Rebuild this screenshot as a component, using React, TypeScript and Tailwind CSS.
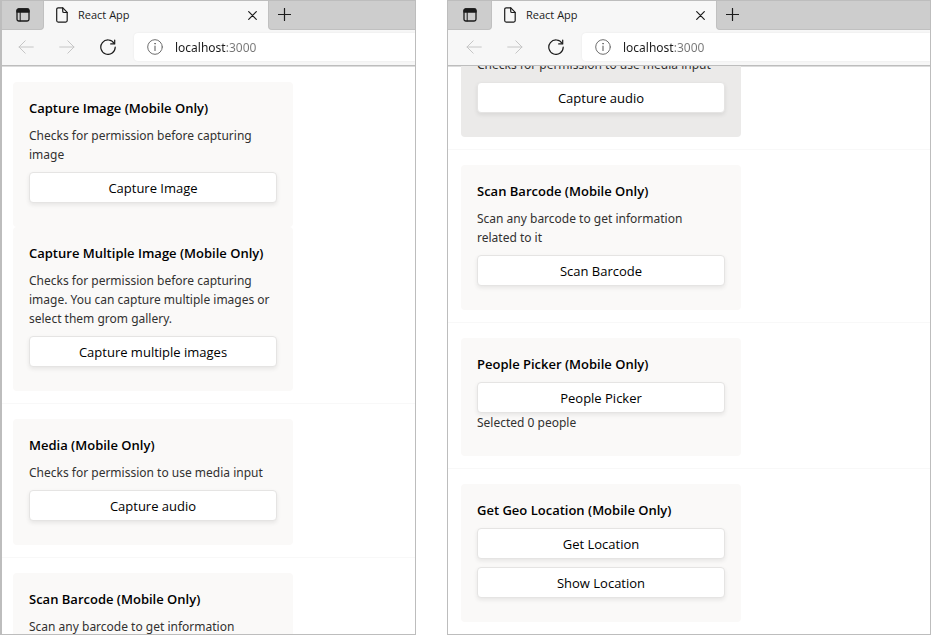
import type { ReactNode } from 'react';

const strokeProps = {
  fill: 'none',
  stroke: 'currentColor',
  strokeLinecap: 'round' as const,
  strokeLinejoin: 'round' as const,
};

function TabActionsIcon() {
  return (
    <svg width="14" height="14" viewBox="0 0 14 14" {...strokeProps} strokeWidth="1.3">
      <rect x="1" y="1" width="12" height="12" rx="1.8" />
      <path d="M1 2.8C1 1.8 1.8 1 2.8 1h8.4C12.2 1 13 1.8 13 2.8V4H1z" fill="currentColor" />
      <path d="M4.2 4v9" strokeWidth="1" />
    </svg>
  );
}

function PageIcon() {
  return (
    <svg width="12" height="16" viewBox="0 0 12 16" {...strokeProps} strokeWidth="1.2">
      <path d="M2.2.8h4.6l4.4 4.6v8.2c0 .9-.6 1.5-1.5 1.5H2.2c-.9 0-1.5-.6-1.5-1.5V2.3C.7 1.4 1.300.8 2.200.8z" />
      <path d="M6.700.9v3.300c0 .8.5 1.300 1.300 1.300h3.100" />
    </svg>
  );
}

function CloseIcon() {
  return (
    <svg width="9" height="9" viewBox="0 0 9 9" {...strokeProps} strokeWidth="1.2">
      <path d="M.7.7l7.600 7.600M8.300.7L.7 8.300" />
    </svg>
  );
}

function PlusIcon() {
  return (
    <svg width="13" height="13" viewBox="0 0 13 13" {...strokeProps} strokeWidth="1.2">
      <path d="M6.500.5v12M.5 6.500h12" />
    </svg>
  );
}

function ArrowIcon({ forward = false }: { forward?: boolean }) {
  return (
    <svg width="16" height="14" viewBox="0 0 16 14" {...strokeProps} strokeWidth="1">
      {forward ? <path d="M.7 7h14.300M8.800.8L15 7l-6.200 6.200" /> : <path d="M15.300 7H1M7.200.8L1 7l6.200 6.200" />}
    </svg>
  );
}

function RefreshIcon() {
  return (
    <svg width="16" height="16" viewBox="0 0 16 16" {...strokeProps} strokeWidth="1.2">
      <path d="M14.200 4.500A7.200 7.200 0 1 0 15.200 8" />
      <path d="M14.700 1v3.900h-4" />
    </svg>
  );
}

function InfoIcon() {
  return (
    <svg width="16" height="16" viewBox="0 0 16 16" {...strokeProps} strokeWidth="1">
      <circle cx="8" cy="8" r="7.300" />
      <path d="M8 7v4.500" strokeWidth="1.200" />
      <circle cx="8" cy="4.700" r=".4" fill="currentColor" />
    </svg>
  );
}

type Frame = { border: string; firstTab: string; toolbar: string; page: string };

const thickFrame: Frame = { border: 'border-l-2', firstTab: 'w-[42px]', toolbar: 'pl-4', page: 'pl-[11px]' };
const thinFrame: Frame = { border: 'border-l', firstTab: 'w-11', toolbar: 'pl-[18px]', page: 'pl-[13px]' };

function Browser({ frame, scrolled = false, children }: { frame: Frame; scrolled?: boolean; children: ReactNode }) {
  return (
    <section className={`flex min-h-0 min-w-0 flex-col overflow-hidden border border-[#bdbdbd] bg-white ${frame.border}`}>
      <header className="shrink-0 border-b border-[#bdbdbd] bg-[#f7f7f7] text-[#1b1b1b] shadow-[0_1px_0_#dcdcdc]">
        <div className="flex h-[29px] bg-[#f7f7f7]">
          <button
            aria-label="Tab actions"
            className={`flex shrink-0 items-center justify-center rounded-br border-r border-b border-[#c0c0c0] bg-[#cdcdcd] ${frame.firstTab}`}
          >
            <TabActionsIcon />
          </button>
          <div className="flex w-56 shrink-0 items-center pr-[11px] pb-px pl-3">
            <PageIcon />
            <span className="ml-[10px] flex-1 text-[11px] leading-4">React App</span>
            <button aria-label="Close tab">
              <CloseIcon />
            </button>
          </div>
          <div className="flex flex-1 items-center rounded-bl border-b border-l border-[#c0c0c0] bg-[#cdcdcd] pb-px pl-[9px]">
            <button aria-label="New tab">
              <PlusIcon />
            </button>
          </div>
        </div>
        <div className={`flex h-[35px] items-center pb-px ${frame.toolbar}`}>
          <button aria-label="Back" disabled className="text-[#c6c6c6]">
            <ArrowIcon />
          </button>
          <button aria-label="Forward" disabled className="ml-[25px] text-[#c6c6c6]">
            <ArrowIcon forward />
          </button>
          <button aria-label="Refresh" className="ml-[25px]">
            <RefreshIcon />
          </button>
          <label className="ml-[18px] flex h-7 min-w-0 flex-1 items-center rounded-l bg-white pl-[13px] text-[#6e6e6e] shadow-[0_0_2px_rgba(0,0,0,0.08)]">
            <InfoIcon />
            <input
              aria-label="Address"
              defaultValue="localhost:3000"
              className="ml-3 min-w-0 flex-1 bg-[linear-gradient(90deg,#1b1b1b_51px,#767676_51px)] bg-clip-text pt-0.5 font-['Noto_Sans',sans-serif] text-xs leading-5 text-transparent outline-none"
            />
          </label>
        </div>
      </header>
      <main className={`flex min-h-0 flex-1 flex-col overflow-hidden ${scrolled ? 'justify-end pb-3' : 'pt-4'}`}>
        <div className="flex shrink-0 flex-col">{renderCards(children, frame.page)}</div>
      </main>
    </section>
  );
}

function renderCards(children: ReactNode, inset: string) {
  const groups = Array.isArray(children) ? children : [children];
  return groups.map((group, index) => (
    <div key={index}>
      {index > 0 && <hr className="mt-3 mb-[15px] border-t border-[#f8f8f8]" />}
      <div className={inset}>{group}</div>
    </div>
  ));
}

type CardProps = { title?: string; text?: string; actions: string[]; result?: string; hovered?: boolean };

function Card({ title, text, actions, result, hovered = false }: CardProps) {
  return (
    <article
      className={`flex w-70 flex-col rounded px-4 pt-4 pb-6 font-['Noto_Sans',sans-serif] text-xs leading-[19px] text-[#323130] ${hovered ? 'bg-[#ebeae9]' : 'bg-[#faf9f8]'}`}
    >
      {title && (
        <h2 className="font-['Open_Sans',sans-serif] text-[13px] leading-5 font-semibold text-black">{title}</h2>
      )}
      {text && <p className="mt-2">{text}</p>}
      {actions.map((action) => (
        <button
          key={action}
          className="mt-2 h-[31px] rounded border border-[#e5e4e3] bg-white pt-0.5 font-['Open_Sans',sans-serif] text-[13px] font-medium text-black shadow-[0_2px_4px_rgba(0,0,0,0.08)]"
        >
          {action}
        </button>
      ))}
      {result && <p>{result}</p>}
    </article>
  );
}

export default function App() {
  return (
    <div className="grid h-screen grid-cols-[416fr_484fr] grid-rows-1 gap-[31px] bg-white pr-px font-['Open_Sans','Noto_Sans',sans-serif]">
      <Browser frame={thickFrame}>
        <>
          <Card
            title="Capture Image (Mobile Only)"
            text="Checks for permission before capturing image"
            actions={['Capture Image']}
          />
          <Card
            title="Capture Multiple Image (Mobile Only)"
            text="Checks for permission before capturing image. You can capture multiple images or select them grom gallery."
            actions={['Capture multiple images']}
          />
        </>
        <Card
          title="Media (Mobile Only)"
          text="Checks for permission to use media input"
          actions={['Capture audio']}
        />
        <Card
          title="Scan Barcode (Mobile Only)"
          text="Scan any barcode to get information related to it"
          actions={['Scan Barcode']}
        />
      </Browser>
      <Browser frame={thinFrame} scrolled>
        <Card text="Checks for permission to use media input" actions={['Capture audio']} hovered />
        <Card
          title="Scan Barcode (Mobile Only)"
          text="Scan any barcode to get information related to it"
          actions={['Scan Barcode']}
        />
        <Card title="People Picker (Mobile Only)" actions={['People Picker']} result="Selected 0 people" />
        <Card title="Get Geo Location (Mobile Only)" actions={['Get Location', 'Show Location']} />
      </Browser>
    </div>
  );
}
